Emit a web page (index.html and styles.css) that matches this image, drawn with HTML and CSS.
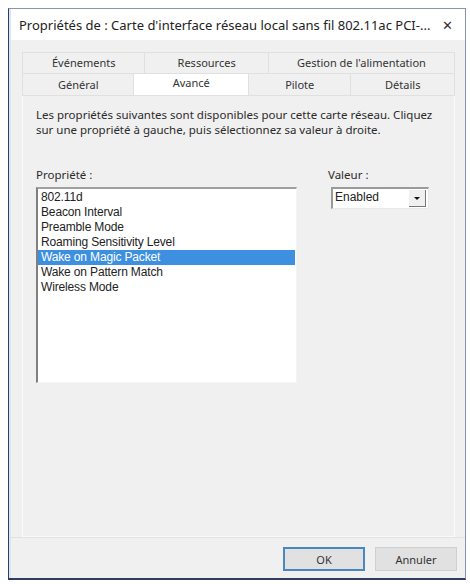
FILE: index.html
```html
<!DOCTYPE html>
<html lang="fr">
<head>
    <meta charset="UTF-8">
    <title>Propriétés de : Carte d'interface réseau local sans fil 802.11ac PCI</title>
    <link rel="stylesheet" href="styles.css">
</head>
<body>
    <div class="window">
        <div class="titlebar">
            <span class="title">Propriétés de : Carte d'interface réseau local sans fil 802.11ac PCI-...</span>
            <span class="close">&#x2715;</span>
        </div>

        <div class="content">
            <div class="tab-row row-top">
                <div class="tab" style="width:123px">Événements</div>
                <div class="tab" style="width:124px">Ressources</div>
                <div class="tab" style="width:188px">Gestion de l'alimentation</div>
            </div>
            <div class="tab-row row-bottom">
                <div class="tab" style="width:112px">Général</div>
                <div class="tab selected" style="width:115px">Avancé</div>
                <div class="tab" style="width:103px">Pilote</div>
                <div class="tab" style="width:105px">Détails</div>
            </div>

            <div class="panel">
                <p class="desc">Les propriétés suivantes sont disponibles pour cette carte réseau. Cliquez<br>
                    sur une propriété à gauche, puis sélectionnez sa valeur à droite.</p>

                <div class="fields">
                    <div class="prop-col">
                        <div class="label">Propriété :</div>
                        <ul class="listbox">
                            <li>802.11d</li>
                            <li>Beacon Interval</li>
                            <li>Preamble Mode</li>
                            <li>Roaming Sensitivity Level</li>
                            <li class="active">Wake on Magic Packet</li>
                            <li>Wake on Pattern Match</li>
                            <li>Wireless Mode</li>
                        </ul>
                    </div>
                    <div class="value-col">
                        <div class="label">Valeur :</div>
                        <div class="combo">
                            <span class="combo-text">Enabled</span>
                            <span class="combo-btn"><span class="arrow"></span></span>
                        </div>
                    </div>
                </div>
            </div>
        </div>

        <div class="footer">
            <button class="btn default">OK</button>
            <button class="btn">Annuler</button>
        </div>
    </div>
</body>
</html>
```

FILE: styles.css
```css
body {
    margin: 0;
    background: #fff;
    font-family: "Noto Sans", "Open Sans", sans-serif;
    color: #2a2a2a;
}
.window {
    margin: 8px 0 0 8px;
    width: 458px;
    height: 572px;
    box-sizing: border-box;
    border: 1px solid #8a96ad;
    border-left-color: #2e3d62;
    border-bottom: 2px solid #2e3d62;
    background: #f0f0f0;
    display: flex;
    flex-direction: column;
}
.titlebar {
    height: 32px;
    background: #fff;
    display: flex;
    align-items: center;
    padding: 0 0 0 8px;
    border-left: 2px solid #d8e6f6;
}
.title {
    flex: 1;
    font-size: 13px;
    color: #222;
    white-space: nowrap;
}
.close {
    width: 36px;
    text-align: center;
    font-size: 13px;
    color: #333;
}
.content {
    flex: 1;
    padding: 12px 10px 0 11px;
    display: flex;
    flex-direction: column;
    border-left: 2px solid #d8e6f6;
}
.tab-row {
    display: flex;
    height: 22px;
}
.tab {
    box-sizing: border-box;
    height: 22px;
    font-size: 11px;
    line-height: 20px;
    text-align: center;
    border: 1px solid #e0e0e0;
    border-right: none;
    background: #f0f0f0;
    color: #333;
}
.tab:last-child {
    border-right: 1px solid #e0e0e0;
}
.row-bottom .tab {
    border-top: none;
    line-height: 22px;
}
.tab.selected {
    background: #fff;
    line-height: 18px;
}
.panel {
    height: 441px;
    box-sizing: border-box;
    border: 1px solid #fafafa;
    border-top: none;
    padding: 11px 13px 0 13px;
    background: #f0f0f0;
}
.desc {
    margin: 0;
    font-size: 11.5px;
    line-height: 15px;
    white-space: nowrap;
}
.fields {
    display: flex;
    margin-top: 31px;
}
.label {
    font-size: 11.5px;
    line-height: 14px;
    height: 14px;
    margin-bottom: 5px;
}
.listbox {
    list-style: none;
    margin: 0;
    padding: 1px 0 0 0;
    width: 261px;
    height: 196px;
    box-sizing: border-box;
    background: #fff;
    border-top: 2px solid #a0a0a0;
    border-left: 2px solid #808080;
    border-right: 1px solid #f4f4f4;
    border-bottom: 1px solid #f4f4f4;
}
.listbox li {
    height: 15px;
    line-height: 15px;
    font-family: "Liberation Sans", Arial, sans-serif;
    font-size: 12px;
    padding-left: 3px;
    color: #222;
    letter-spacing: -0.15px;
}
.listbox li.active {
    background: #3d8fe0;
    color: #fff;
    margin-right: 1px;
}
.value-col {
    margin-left: 34px;
}
.value-col .label {
    margin-left: -3px;
}
.combo {
    width: 98px;
    height: 22px;
    box-sizing: border-box;
    display: flex;
    background: #fff;
    border-top: 2px solid #9a9a9a;
    border-left: 2px solid #9a9a9a;
    border-right: 1px solid #e8e8e8;
    border-bottom: 1px solid #e8e8e8;
}
.combo-text {
    flex: 1;
    font-family: "Liberation Sans", Arial, sans-serif;
    font-size: 12px;
    line-height: 17px;
    padding-left: 2px;
    color: #222;
}
.combo-btn {
    width: 16px;
    margin: 1px 2px 1px 0;
    background: #f0f0f0;
    border-right: 1px solid #777;
    border-bottom: 1px solid #777;
    display: flex;
    align-items: center;
    justify-content: center;
}
.arrow {
    width: 0;
    height: 0;
    border-left: 3px solid transparent;
    border-right: 3px solid transparent;
    border-top: 3px solid #111;
}
.footer {
    height: 42px;
    display: flex;
    justify-content: flex-end;
    align-items: flex-start;
    gap: 10px;
    padding: 9px 8px 0 0;
    box-sizing: border-box;
    border-top: 1px solid #e2e2e2;
    border-left: 2px solid #d8e6f6;
}
.btn {
    width: 82px;
    height: 24px;
    font-family: "Noto Sans", "Open Sans", sans-serif;
    font-size: 11px;
    color: #333;
    background: #e1e1e1;
    border: 1px solid #cfcfcf;
    padding: 0;
}
.btn.default {
    border: 2px solid #4a87c0;
}
```
